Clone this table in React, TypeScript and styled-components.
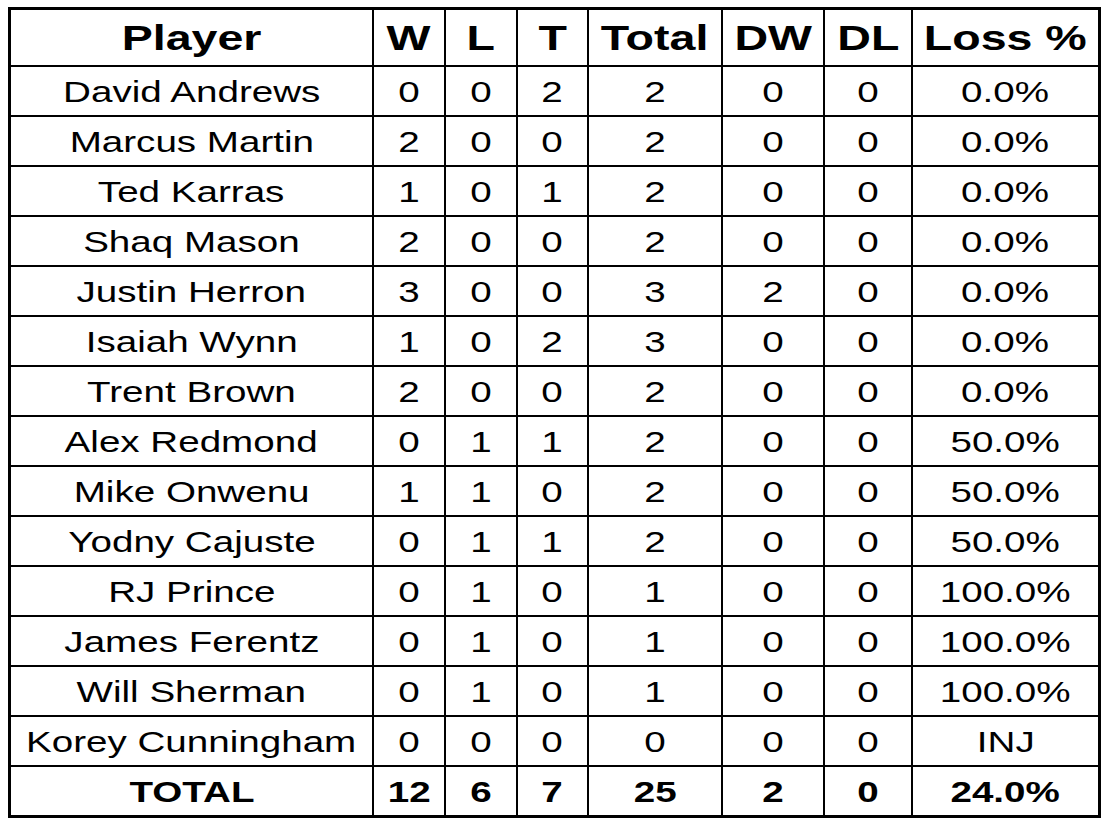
import React from "react";
import styled, { createGlobalStyle } from "styled-components";

const Global = createGlobalStyle`
  html, body { margin: 0; padding: 0; background: #fff; }
  body { font-family: "Liberation Sans", Arial, sans-serif; color: #000; }
`;

const Page = styled.div`
  padding: 7px 0 0 8px;
`;

const Grid = styled.div`
  display: grid;
  width: fit-content;
  grid-template-columns: 361px 70px 70px 69px 132px 100px 86px 185px;
  grid-template-rows: 55px repeat(15, 48px);
  gap: 2px;
  padding: 3px;
  background: #000;
`;

const Cell = styled.div<{ $bold?: boolean; $head?: boolean }>`
  background: #fff;
  display: flex;
  align-items: center;
  justify-content: center;
  overflow: hidden;
  font-size: ${(p) => (p.$head ? "35px" : "29px")};
  font-weight: ${(p) => (p.$bold || p.$head ? 700 : 400)};
  line-height: 1;
  white-space: nowrap;
  padding-top: ${(p) => (p.$head ? "0" : "2px")};
`;

const Stretch = styled.span<{ $head?: boolean }>`
  display: inline-block;
  transform: scaleX(${(p) => (p.$head ? 1.33 : 1.33)});
  transform-origin: center;
`;

const headers = ["Player", "W", "L", "T", "Total", "DW", "DL", "Loss %"];

const rows: (string | number)[][] = [
  ["David Andrews", 0, 0, 2, 2, 0, 0, "0.0%"],
  ["Marcus Martin", 2, 0, 0, 2, 0, 0, "0.0%"],
  ["Ted Karras", 1, 0, 1, 2, 0, 0, "0.0%"],
  ["Shaq Mason", 2, 0, 0, 2, 0, 0, "0.0%"],
  ["Justin Herron", 3, 0, 0, 3, 2, 0, "0.0%"],
  ["Isaiah Wynn", 1, 0, 2, 3, 0, 0, "0.0%"],
  ["Trent Brown", 2, 0, 0, 2, 0, 0, "0.0%"],
  ["Alex Redmond", 0, 1, 1, 2, 0, 0, "50.0%"],
  ["Mike Onwenu", 1, 1, 0, 2, 0, 0, "50.0%"],
  ["Yodny Cajuste", 0, 1, 1, 2, 0, 0, "50.0%"],
  ["RJ Prince", 0, 1, 0, 1, 0, 0, "100.0%"],
  ["James Ferentz", 0, 1, 0, 1, 0, 0, "100.0%"],
  ["Will Sherman", 0, 1, 0, 1, 0, 0, "100.0%"],
  ["Korey Cunningham", 0, 0, 0, 0, 0, 0, "INJ"],
];

const totals: (string | number)[] = ["TOTAL", 12, 6, 7, 25, 2, 0, "24.0%"];

export default function App() {
  return (
    <Page>
      <Global />
      <Grid>
        {headers.map((h) => (
          <Cell key={h} $head>
            <Stretch $head>{h}</Stretch>
          </Cell>
        ))}
        {rows.map((r, i) =>
          r.map((v, j) => (
            <Cell key={`${i}-${j}`}>
              <Stretch>{v}</Stretch>
            </Cell>
          ))
        )}
        {totals.map((v, j) => (
          <Cell key={`t-${j}`} $bold>
            <Stretch>{v}</Stretch>
          </Cell>
        ))}
      </Grid>
    </Page>
  );
}
